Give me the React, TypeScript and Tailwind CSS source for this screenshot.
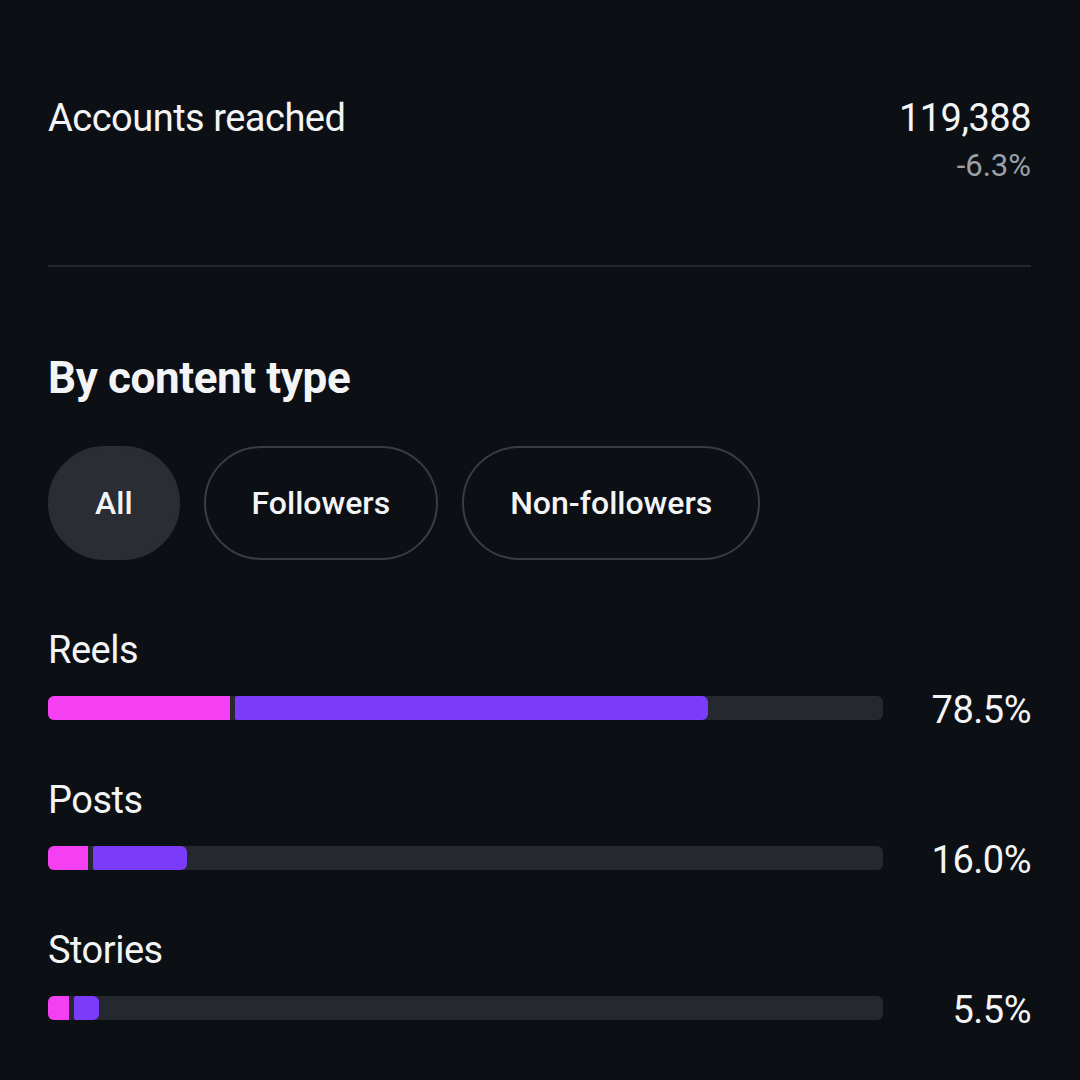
import React from 'react';

interface ContentRow {
  label: string;
  followers: number;
  nonFollowers: number;
  value: string;
}

// widths in px of the 835px track
const rows: ContentRow[] = [
  { label: 'Reels', followers: 182, nonFollowers: 473, value: '78.5%' },
  { label: 'Posts', followers: 40, nonFollowers: 94, value: '16.0%' },
  { label: 'Stories', followers: 21, nonFollowers: 25, value: '5.5%' },
];

const chips = ['All', 'Followers', 'Non-followers'];

const Bar: React.FC<{ row: ContentRow }> = ({ row }) => (
  <div className="mt-[14px] flex h-[44px] items-center">
    <div className="flex h-[24px] flex-1 overflow-hidden rounded-[6px] bg-[#25282e]">
      <div className="h-full bg-[#f440f2]" style={{ width: `${row.followers}px` }} />
      <div
        className="ml-[5px] h-full rounded-r-[6px] rounded-l-[2px] bg-[#7a3cfa]"
        style={{ width: `${row.nonFollowers}px` }}
      />
    </div>
    <div className="w-[148px] translate-y-[2px] text-right text-[38px] leading-[44px] tracking-[-0.5px] text-[#f3f4f5]">
      {row.value}
    </div>
  </div>
);

export default function App() {
  const font = "font-['Roboto',_'Noto_Sans',_sans-serif]";

  return (
    <div className={`min-h-[1080px] w-[1080px] bg-[#0c0f14] pl-[48px] pr-[49px] pt-[96px] text-[#f3f4f5] ${font}`}>
      <div className="flex items-start justify-between">
        <div className="text-[38px] leading-[44px] tracking-[-0.5px]">Accounts reached</div>
        <div className="flex flex-col items-end">
          <div className="text-[38px] leading-[44px] tracking-[-0.5px]">119,388</div>
          <div className="mt-[8px] text-[31px] leading-[36px] text-[#9ca1a8]">-6.3%</div>
        </div>
      </div>

      <div className="mt-[81px] h-[2px] bg-[#25282d]" />

      <h2 className="mt-[85px] text-[44px] font-bold leading-[52px] tracking-[-0.4px]">By content type</h2>

      <div className="mt-[42px] flex gap-[24px]">
        {chips.map((chip, i) => (
          <div
            key={chip}
            className={`flex h-[114px] items-center rounded-full border-2 text-[32px] font-medium ${
              i === 0 ? 'border-[#2a2d33] bg-[#2a2d33] px-[45px]' : 'border-[#393c41] px-[46px]'
            }`}
          >
            {chip}
          </div>
        ))}
      </div>

      <div className="mt-[68px] flex flex-col gap-[48px]">
        {rows.map((row) => (
          <div key={row.label}>
            <div className="text-[38px] leading-[44px] tracking-[-0.5px]">{row.label}</div>
            <Bar row={row} />
          </div>
        ))}
      </div>
    </div>
  );
}
